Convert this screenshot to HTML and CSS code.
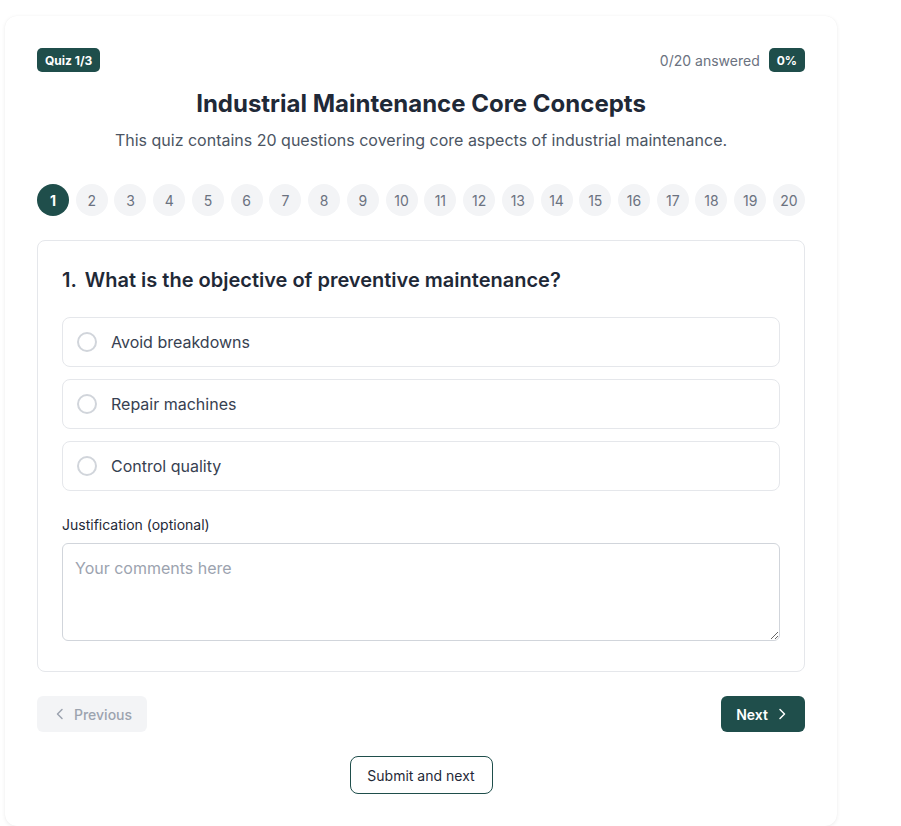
FILE: index.html
```html
<!DOCTYPE html>
<html lang="en">
<head>
<meta charset="utf-8">
<title>Quiz</title>
<link rel="stylesheet" href="styles.css">
</head>
<body>
<div class="page">
  <div class="card">
    <div class="top-row">
      <span class="badge">Quiz 1/3</span>
      <div class="progress">
        <span class="answered">0/20 answered</span>
        <span class="badge">0%</span>
      </div>
    </div>
    <h1 class="title">Industrial Maintenance Core Concepts</h1>
    <p class="subtitle">This quiz contains 20 questions covering core aspects of industrial maintenance.</p>
    <div class="steps">
      <span class="step active">1</span>
      <span class="step">2</span>
      <span class="step">3</span>
      <span class="step">4</span>
      <span class="step">5</span>
      <span class="step">6</span>
      <span class="step">7</span>
      <span class="step">8</span>
      <span class="step">9</span>
      <span class="step">10</span>
      <span class="step">11</span>
      <span class="step">12</span>
      <span class="step">13</span>
      <span class="step">14</span>
      <span class="step">15</span>
      <span class="step">16</span>
      <span class="step">17</span>
      <span class="step">18</span>
      <span class="step">19</span>
      <span class="step">20</span>
    </div>
    <div class="question">
      <h2 class="q-title"><span class="q-num">1.</span>What is the objective of preventive maintenance?</h2>
      <div class="options">
        <label class="option"><span class="radio"></span>Avoid breakdowns</label>
        <label class="option"><span class="radio"></span>Repair machines</label>
        <label class="option"><span class="radio"></span>Control quality</label>
      </div>
      <div class="field-label">Justification (optional)</div>
      <textarea class="comments" placeholder="Your comments here"></textarea>
    </div>
    <div class="nav">
      <button class="btn btn-prev" type="button">
        <svg class="chev" width="16" height="16" viewBox="0 0 16 16" fill="none" stroke="currentColor" stroke-width="1.5" stroke-linecap="round" stroke-linejoin="round"><path d="M10 3.5L5.5 8l4.5 4.5"/></svg>
        Previous
      </button>
      <button class="btn btn-next" type="button">
        Next
        <svg class="chev" width="16" height="16" viewBox="0 0 16 16" fill="none" stroke="currentColor" stroke-width="1.5" stroke-linecap="round" stroke-linejoin="round"><path d="M6 3.5L10.5 8 6 12.5"/></svg>
      </button>
    </div>
    <div class="submit-row">
      <button class="btn-submit" type="button">Submit and next</button>
    </div>
  </div>
</div>
</body>
</html>
```
FILE: styles.css
```css
* { box-sizing: border-box; }
html, body { margin: 0; padding: 0; background: #ffffff; }
body {
  font-family: Inter, "Noto Sans", "Liberation Sans", sans-serif;
  color: #1f2937;
}
.page {
  padding: 16px 0 0 5px;
}
.card {
  width: 832px;
  height: 810px;
  background: #fff;
  border-radius: 12px;
  box-shadow: 0 1px 4px rgba(0, 0, 0, 0.07), 0 0 1px rgba(0, 0, 0, 0.05);
  padding: 32px;
}
.top-row {
  display: flex;
  justify-content: space-between;
  align-items: center;
  height: 24px;
}
.badge {
  display: inline-flex;
  align-items: center;
  height: 24px;
  padding: 0 8px;
  background: #1f4e4b;
  color: #fff;
  font-size: 12px;
  font-weight: 700;
  border-radius: 5px;
}
.progress {
  display: flex;
  align-items: center;
  gap: 9px;
}
.answered {
  font-size: 14px;
  color: #6b7280;
}
.title {
  margin: 16px 0 0;
  text-align: center;
  font-size: 24px;
  line-height: 32px;
  font-weight: 700;
  color: #1f2937;
}
.subtitle {
  margin: 8px 0 0;
  text-align: center;
  font-size: 16px;
  line-height: 24px;
  color: #4b5563;
}
.steps {
  margin-top: 32px;
  display: flex;
  justify-content: space-between;
}
.step {
  width: 32px;
  height: 32px;
  border-radius: 50%;
  background: #f3f4f6;
  color: #6b7280;
  font-size: 14px;
  font-weight: 400;
  display: flex;
  align-items: center;
  justify-content: center;
}
.step.active {
  background: #1f4e4b;
  color: #fff;
  font-weight: 700;
}
.question {
  margin-top: 24px;
  border: 1px solid #e5e7eb;
  border-radius: 8px;
  padding: 24px 24px 30px;
}
.q-title {
  margin: 0;
  font-size: 20px;
  line-height: 30px;
  font-weight: 600;
  color: #1f2937;
}
.q-num {
  margin-right: 8px;
}
.options {
  margin-top: 22px;
  display: flex;
  flex-direction: column;
  gap: 12px;
}
.option {
  display: flex;
  align-items: center;
  height: 50px;
  padding: 0 14px;
  border: 1px solid #e5e7eb;
  border-radius: 8px;
  font-size: 16px;
  color: #374151;
}
.radio {
  width: 20px;
  height: 20px;
  border: 2px solid #d1d5db;
  border-radius: 50%;
  margin-right: 14px;
  flex-shrink: 0;
}
.field-label {
  margin-top: 24px;
  font-size: 14px;
  line-height: 20px;
  font-weight: 400;
  color: #1f2937;
}
.comments {
  display: block;
  margin-top: 8px;
  width: 100%;
  height: 98px;
  border: 1px solid #d1d5db;
  border-radius: 6px;
  padding: 12px;
  font-family: inherit;
  font-size: 16px;
  line-height: 24px;
  color: #374151;
  resize: vertical;
}
.comments::placeholder {
  color: #9ca3af;
}
.nav {
  margin-top: 24px;
  display: flex;
  justify-content: space-between;
}
.btn {
  display: inline-flex;
  align-items: center;
  gap: 6px;
  height: 36px;
  border: none;
  border-radius: 6px;
  font-family: inherit;
  font-size: 14px;
  padding: 0 16px;
}
.chev {
  flex-shrink: 0;
}
.btn-prev {
  background: #f3f4f6;
  color: #9ca3af;
  font-weight: 500;
  width: 110px;
  justify-content: center;
}
.btn-next {
  background: #1f4e4b;
  color: #fff;
  font-weight: 600;
  width: 84px;
  justify-content: center;
}
.submit-row {
  margin-top: 24px;
  display: flex;
  justify-content: center;
}
.btn-submit {
  height: 38px;
  width: 143px;
  background: #fff;
  border: 1px solid #1f4e4b;
  border-radius: 8px;
  font-family: inherit;
  font-size: 14px;
  font-weight: 400;
  color: #1f2937;
}
```
